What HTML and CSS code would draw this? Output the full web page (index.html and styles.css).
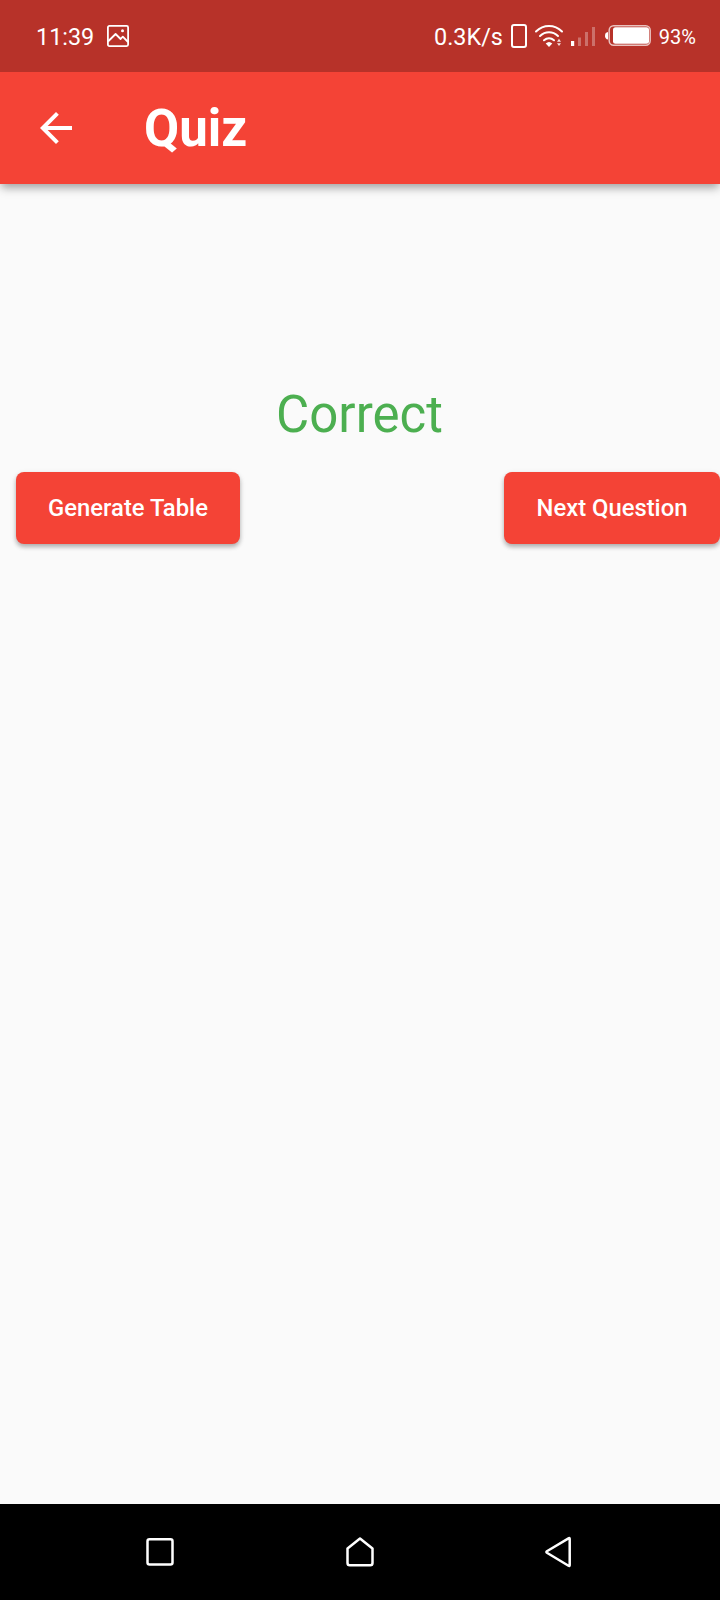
FILE: index.html
```html
<!DOCTYPE html>
<html lang="en">
<head>
<meta charset="utf-8">
<title>Quiz</title>
<link rel="stylesheet" href="styles.css">
</head>
<body>
<div class="screen">
  <div class="status">
    <span class="clock">11:39</span>
    <svg class="picture" width="22" height="22" viewBox="0 0 22 22" fill="none" stroke="#fff" stroke-width="1.8" stroke-linejoin="round">
      <rect x=".9" y=".9" width="20.2" height="20.2" rx="1.5"/>
      <path d="M1 16.5 8.6 9l5 5 2.2-2.3L21 17"/>
      <circle cx="15.5" cy="5.7" r="1.5" fill="#fff" stroke="none"/>
    </svg>
    <span class="speed">0.3K/s</span>
    <svg class="indicators" width="142" height="26" viewBox="510 23 142 26" fill="none" stroke="#fff">
      <rect x="512" y="24.9" width="14" height="22" rx="2" stroke-width="2"/>
      <g stroke-width="2" stroke-linecap="round">
        <path d="M536 31.5C543.500 24.200 554.500 24.200 562 31.500"/>
        <path d="M540 36C545.300 31 552.700 31 558 36"/>
        <path d="M544 40.300C547 37.700 551 37.700 554 40.300"/>
      </g>
      <path d="M545.700 43.500Q549 40.500 552.300 43.500L549 47Z" fill="#fff" stroke="none"/>
      <path d="M557 41.800 559 38.800 561 41.800ZM557 43.200H561L559 46Z" fill="#fff" stroke="none" opacity=".85"/>
      <g fill="#fff" stroke="none">
        <rect x="571" y="41" width="3.200" height="5"/>
        <g opacity=".3">
          <rect x="578" y="37.500" width="3" height="8.500"/>
          <rect x="585" y="32" width="3" height="14"/>
          <rect x="592" y="27" width="3" height="19"/>
        </g>
        <path d="M608 32V39.500Q605 39 605 35.700T608 32Z"/>
        <rect x="613" y="27.300" width="36" height="16.400" rx="2.500"/>
      </g>
      <rect x="609.200" y="25.800" width="41" height="19.400" rx="4.500" stroke-width="1.500" opacity=".7"/>
    </svg>
    <span class="charge">93%</span>
  </div>
  <header class="appbar">
    <svg class="back" width="48" height="48" viewBox="0 0 24 24" fill="#fff"><path d="M20 11H7.830l5.590-5.590L12 4l-8 8 8 8 1.410-1.410L7.830 13H20v-2z"/></svg>
    <h1 class="title">Quiz</h1>
  </header>
  <main class="content">
    <p class="result">Correct</p>
    <div class="actions">
      <button class="button generate">Generate Table</button>
      <button class="button next">Next Question</button>
    </div>
  </main>
  <nav class="navbar">
    <svg width="32" height="32" viewBox="0 0 32 32" class="nav-icon"><rect x="3.500" y="3.200" width="25" height="25.400" rx="2"/></svg>
    <svg width="32" height="32" viewBox="0 0 32 32" class="nav-icon"><path d="M16 2.500 28.500 12.500V27Q28.500 29.300 26.200 29.300H5.800Q3.500 29.300 3.500 27V12.500Z"/></svg>
    <svg width="32" height="32" viewBox="0 0 32 32" class="nav-icon"><path d="M25.700 3Q25.700 1.600 24.500 2.300L2.900 15.300Q1.900 16 2.900 16.700L24.500 29.700Q25.700 30.400 25.700 29Z"/></svg>
  </nav>
</div>
</body>
</html>
```

FILE: styles.css
```css
body {
  margin: 0;
  font-family: Roboto, "Noto Sans", sans-serif;
}
.screen {
  display: flex;
  flex-direction: column;
  width: 720px;
  height: 1600px;
  overflow: hidden;
  background: #fafafa;
}
.status {
  position: relative;
  z-index: 1;
  box-sizing: border-box;
  display: flex;
  align-items: center;
  height: 72px;
  padding: 0 24px 0 36px;
  background: #b73229;
  color: #fff;
  font-size: 23.4px;
}
.clock,
.speed { padding-top: 1px; }
.picture { margin-left: 13px; }
.speed { margin-left: auto; }
.indicators { margin-left: 7px; }
.charge {
  margin-left: 7px;
  padding-top: 2px;
  font-size: 20px;
}
.appbar {
  display: flex;
  flex: none;
  align-items: center;
  height: 112px;
  background: #f44336;
  color: #fff;
  box-shadow: 0 5px 8px -2px rgba(0, 0, 0, .26), 0 5px 10px rgba(0, 0, 0, .13);
}
.back { margin-left: 32px; }
.title {
  margin: 0 0 0 64px;
  padding-top: 2px;
  font-size: 51px;
  font-weight: 700;
  line-height: 60px;
}
.content {
  flex: 1;
  padding-top: 201px;
}
.result {
  margin: 0;
  padding-right: 1px;
  color: #4caf50;
  font-size: 51px;
  line-height: 60px;
  text-align: center;
}
.actions {
  display: flex;
  justify-content: space-between;
  margin-top: 27px;
  padding-left: 16px;
}
.button {
  height: 72px;
  padding: 0;
  border: 0;
  border-radius: 8px;
  background: #f44336;
  color: #fff;
  font: 500 23.8px/72px Roboto, "Noto Sans", sans-serif;
  box-shadow: 0 3px 4px rgba(0, 0, 0, .24), 0 2px 6px rgba(0, 0, 0, .1);
}
.generate { width: 224px; }
.next { width: 216px; }
.navbar {
  box-sizing: border-box;
  display: flex;
  justify-content: space-between;
  height: 96px;
  padding: 32px 144px 0;
  background: #000;
}
.nav-icon {
  fill: none;
  stroke: #fff;
  stroke-width: 2.5;
  stroke-linejoin: round;
}
```
